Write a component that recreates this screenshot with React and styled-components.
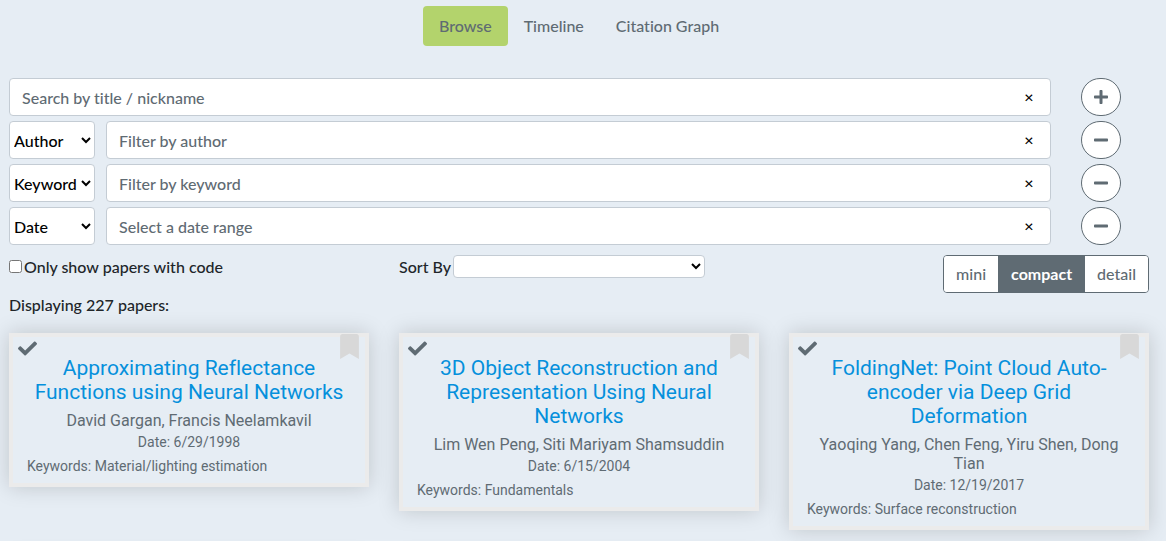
import React, { useState } from "react";
import styled, { createGlobalStyle } from "styled-components";
import { FaBookmark, FaCheck, FaMinus, FaPlus } from "react-icons/fa";

const GlobalStyle = createGlobalStyle`
  *, *::before, *::after { box-sizing: border-box; }
  body {
    margin: 0;
    background: #e6edf4;
    color: #212529;
    font: 500 16px/24px Lato, "Liberation Sans", sans-serif;
    font-variant-ligatures: none;
  }
  button, input, select { font: inherit; font-variant-ligatures: none; }
`;

const Page = styled.div`
  height: 100vh;
  overflow: hidden;
  padding: 6px 17px 0 9px;
`;

const Nav = styled.nav`
  display: flex;
  justify-content: center;
  margin-bottom: 32px;
`;

const NavLink = styled.a`
  padding: 8px 16px;
  border-radius: 4px;
  color: #5f6b73;
  text-decoration: none;
  background: ${(p) => (p.$active ? "#b3d36c" : "transparent")};
`;

const Filters = styled.form`
  display: flex;
  flex-direction: column;
  gap: 5px;
`;

const FilterRow = styled.div`
  display: flex;
  height: 38px;
`;

const FieldSelect = styled.select`
  width: 86px;
  margin-right: 11px;
  border: 1px solid #c4ccd4;
  border-radius: 4px;
  background: #fff;
  color: #000;
`;

const InputBox = styled.div`
  display: flex;
  flex: 1;
  min-width: 0;
  border: 1px solid #c4ccd4;
  border-radius: 4px;
  background: #fff;
`;

const TextInput = styled.input`
  flex: 1;
  min-width: 0;
  padding: 2px 12px 0;
  border: 0;
  background: transparent;
  color: #212529;
  &::placeholder { color: #5f6b73; opacity: 1; }
`;

const ClearButton = styled.button`
  width: 42px;
  padding: 0;
  border: 0;
  background: transparent;
  color: #000;
`;

const RoundButton = styled.button`
  display: flex;
  align-items: center;
  justify-content: center;
  width: 40px;
  margin: 0 28px 0 30px;
  padding: 0;
  border: 1px solid #5f6b73;
  border-radius: 20px;
  background: #fff;
  color: #5f6b73;
`;

const Columns = styled.div`
  display: grid;
  grid-template-columns: repeat(3, minmax(0, 1fr));
  gap: 30px;
  align-items: start;
`;

const Options = styled(Columns)`
  margin-top: 10px;
`;

const Option = styled.div`
  display: flex;
  align-items: flex-start;
  gap: 2px;
`;

const Checkbox = styled.input`
  width: 13px;
  height: 13px;
  margin: 5px 0 0;
`;

const SortSelect = styled.select`
  width: 252px;
  height: 23px;
  border: 1px solid #c4ccd4;
  border-radius: 4px;
  background: #fff;
  color: #000;
`;

const ButtonGroup = styled.div`
  display: flex;
  justify-self: end;
  overflow: hidden;
  border: 1px solid #5f6b73;
  border-radius: 4px;
`;

const SizeButton = styled.button`
  height: 36px;
  padding: 0 12px;
  border: 0;
  border-left: ${(p) => (p.$divided ? "1px solid #5f6b73" : "0")};
  font-weight: ${(p) => (p.$active ? 700 : 500)};
  background: ${(p) => (p.$active ? "#5f6b73" : "#fff")};
  color: ${(p) => (p.$active ? "#fff" : "#5f6b73")};
`;

const Count = styled.p`
  margin: 0 0 16px;
`;

const Card = styled.article`
  position: relative;
  min-height: 120px;
  padding: 19px 14px 8px;
  border: 4px solid #ebebeb;
  box-shadow: 0 0 20px rgba(0, 0, 0, 0.17);
  color: #5f6b73;
  font-family: Roboto, "Liberation Sans", sans-serif;
  font-weight: 400;
  text-align: center;
`;

const CheckMark = styled(FaCheck)`
  position: absolute;
  top: 2px;
  left: 5px;
`;

const BookmarkButton = styled.button`
  position: absolute;
  top: -3px;
  right: 3px;
  display: flex;
  padding: 0;
  border: 0;
  background: transparent;
  color: #d8d8d8;
`;

const Title = styled.h2`
  margin: 0 0 7px;
  padding: 0 4px;
  font-size: 21px;
  line-height: 24px;
  font-weight: 400;
`;

const TitleLink = styled.a`
  color: #0590dc;
  text-decoration: none;
`;

const Authors = styled.p`
  margin: 0 0 4px;
  font-size: 16px;
  line-height: 19px;
`;

const Meta = styled.p`
  margin: 0 0 7px;
  font-size: 14px;
  line-height: 17px;
`;

const Keywords = styled(Meta)`
  margin: 0;
  text-align: left;
`;

const filters = [
  { field: "Author", hint: "Filter by author" },
  { field: "Keyword", hint: "Filter by keyword" },
  { field: "Date", hint: "Select a date range" },
];

const papers = [
  {
    title: "Approximating Reflectance Functions using Neural Networks",
    authors: "David Gargan, Francis Neelamkavil",
    date: "6/29/1998",
    keywords: "Material/lighting estimation",
  },
  {
    title: "3D Object Reconstruction and Representation Using Neural Networks",
    authors: "Lim Wen Peng, Siti Mariyam Shamsuddin",
    date: "6/15/2004",
    keywords: "Fundamentals",
  },
  {
    title: "FoldingNet: Point Cloud Auto-encoder via Deep Grid Deformation",
    authors: "Yaoqing Yang, Chen Feng, Yiru Shen, Dong Tian",
    date: "12/19/2017",
    keywords: "Surface reconstruction",
  },
];

function SearchField({ hint }) {
  const [value, setValue] = useState("");
  return (
    <InputBox>
      <TextInput
        aria-label={hint}
        placeholder={hint}
        value={value}
        onChange={(e) => setValue(e.target.value)}
      />
      <ClearButton type="button" aria-label="Clear" onClick={() => setValue("")}>
        ×
      </ClearButton>
    </InputBox>
  );
}

function PaperCard({ paper }) {
  return (
    <Card>
      <CheckMark size={19} />
      <BookmarkButton type="button" aria-label="Bookmark">
        <FaBookmark size={25} />
      </BookmarkButton>
      <Title>
        <TitleLink href="#paper">{paper.title}</TitleLink>
      </Title>
      <Authors>{paper.authors}</Authors>
      <Meta>Date: {paper.date}</Meta>
      <Keywords>Keywords: {paper.keywords}</Keywords>
    </Card>
  );
}

export default function App() {
  const [size, setSize] = useState("compact");
  return (
    <Page>
      <GlobalStyle />
      <Nav>
        <NavLink href="#browse" $active>Browse</NavLink>
        <NavLink href="#timeline">Timeline</NavLink>
        <NavLink href="#graph">Citation Graph</NavLink>
      </Nav>
      <Filters>
        <FilterRow>
          <SearchField hint="Search by title / nickname" />
          <RoundButton type="button" aria-label="Add filter">
            <FaPlus size={16} />
          </RoundButton>
        </FilterRow>
        {filters.map((f) => (
          <FilterRow key={f.field}>
            <FieldSelect aria-label="Filter field" defaultValue={f.field}>
              {filters.map((o) => (
                <option key={o.field}>{o.field}</option>
              ))}
            </FieldSelect>
            <SearchField hint={f.hint} />
            <RoundButton type="button" aria-label="Remove filter">
              <FaMinus size={16} />
            </RoundButton>
          </FilterRow>
        ))}
      </Filters>
      <Options>
        <Option>
          <Checkbox type="checkbox" id="with-code" />
          <label htmlFor="with-code">Only show papers with code</label>
        </Option>
        <Option>
          <label htmlFor="sort-by">Sort By</label>
          <SortSelect id="sort-by" />
        </Option>
        <ButtonGroup>
          {["mini", "compact", "detail"].map((s, i) => (
            <SizeButton
              key={s}
              type="button"
              $active={s === size}
              $divided={i > 0}
              onClick={() => setSize(s)}
            >
              {s}
            </SizeButton>
          ))}
        </ButtonGroup>
      </Options>
      <Count>Displaying 227 papers:</Count>
      <Columns>
        {papers.map((p) => (
          <PaperCard key={p.title} paper={p} />
        ))}
        {papers.map((p) => (
          <Card key={p.date} aria-hidden="true" />
        ))}
      </Columns>
    </Page>
  );
}
